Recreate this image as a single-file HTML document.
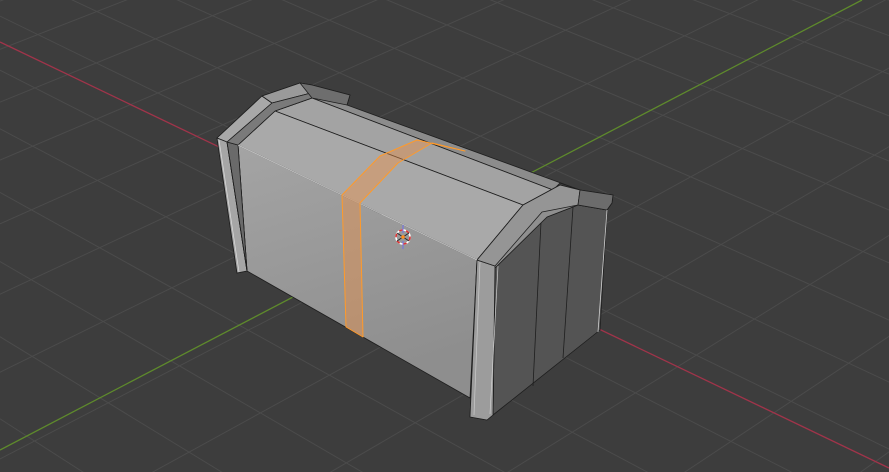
<!DOCTYPE html>
<html><head><meta charset="utf-8"><style>
html,body{margin:0;padding:0;background:#3d3d3d;overflow:hidden;width:889px;height:472px}
svg{display:block}
</style></head><body>
<svg id="s" width="889" height="472" viewBox="0 0 889 472" xmlns="http://www.w3.org/2000/svg">
<defs>
<linearGradient id="fg" x1="0" y1="0" x2="0.3" y2="1">
<stop offset="0" stop-color="#a4a4a4"/><stop offset="1" stop-color="#8e8e8e"/>
</linearGradient>
</defs>
<rect width="889" height="472" fill="#3d3d3d"/>
<g id="grid" stroke="#4b4b4b" stroke-width="1"></g>
<line x1="0" y1="42" x2="889" y2="468" stroke="#a0344a" stroke-width="1.3"/>
<line x1="0" y1="450" x2="862" y2="0" stroke="#5e8a2c" stroke-width="1.3"/>

<g stroke="#1e1e1e" stroke-width="0.8" stroke-linejoin="round">
<polygon points="312,85 350,95 347,105 580,190 560,183 553,190 312,98" fill="#8c8c8c"/>
<polygon points="312,98 553,190 523,205 275,111" fill="#a3a3a3"/>
<polygon points="275,111 523,205 477,260 238,145" fill="#a9a9a9"/>
<polygon points="238,145 477,260 470,398 247,271" fill="url(#fg)"/>
<!-- left cap -->
<polygon points="217,138 262,96 300,83 312,85 312,98 275,111 238,145 247,271 237,273" fill="#8f8f8f"/>
<polygon points="217,138 262,96 272,103 227,142" fill="#a8a8a8"/>
<polygon points="262,96 300,83 311,93 272,103" fill="#9a9a9a"/>
<polygon points="217,138 227,142 247,271 237,273" fill="#a6a6a6"/>
<polygon points="227,142 238,145 247,271" fill="#6a6a6a"/>
<polygon points="272,103 311,93 312,98 275,111 238,145 227,142" fill="#7a7a7a"/>
<polygon points="300,83 312,85 350,95 347,105 312,98" fill="#6e6e6e"/>
<line x1="219" y1="140" x2="239" y2="272" stroke="#dcdcdc" stroke-width="0.7"/>
<line x1="227" y1="142" x2="247" y2="271"/>
<!-- right side panel -->
<polygon points="495,268 547,217 578,205 607,210 600,330 590,338 493,415" fill="#545454"/>
<line x1="541" y1="222" x2="533" y2="386"/>
<line x1="573" y1="207" x2="563" y2="358"/>
<!-- right cap -->
<polygon points="477,260 523,205 560,185 580,190 613,195 612,203 607,210 578,205 547,217 495,268 493,415 487,420 470,417" fill="#8f8f8f"/>
<polygon points="477,260 495,266 493,415 487,420 470,417" fill="#9c9c9c"/>
<polygon points="495,266 542,212 578,205 580,190 560,185 523,205 477,260" fill="#959595"/>
<polygon points="580,190 613,195 612,203 607,210 578,205" fill="#6c6c6c"/>
<line x1="607" y1="210" x2="598" y2="332" stroke="#cfcfcf" stroke-width="0.8"/>
<line x1="480" y1="262" x2="474" y2="415" stroke="#c9c9c9" stroke-width="0.7"/>
<line x1="498" y1="266" x2="490" y2="414" stroke="#cfcfcf" stroke-width="0.7"/>
<line x1="238" y1="145" x2="477" y2="260" stroke="#d8d8d8" stroke-width="0.7"/>
</g>
<g stroke="#ff9a2a" stroke-width="1" fill="#e8904a" fill-opacity="0.45" stroke-linejoin="round">
<polygon points="342,195 380,156 417,140 465,151 432,143 398,163 360,203 363,337 346,327"/>
</g>
<g transform="translate(403,237)">
<circle r="7" fill="none" stroke="#fff" stroke-width="1.6"/>
<circle r="7" fill="none" stroke="#d33" stroke-width="1.6" stroke-dasharray="3.6 3.6"/>
<line x1="0" y1="-12" x2="0" y2="-4" stroke="#66f" stroke-width="0.8"/>
<line x1="0" y1="4" x2="0" y2="12" stroke="#66f" stroke-width="0.8"/>
<line x1="-6" y1="4" x2="6" y2="-4" stroke="#222" stroke-width="0.8"/>
<line x1="-6" y1="-4" x2="6" y2="4" stroke="#222" stroke-width="0.8"/>
<circle r="1.8" fill="#ff8c1a"/>
</g>
</svg>
<script>
(function(){
var g=document.getElementById('grid'),ns='http://www.w3.org/2000/svg';
function ln(x1,y1,x2,y2){var l=document.createElementNS(ns,'line');l.setAttribute('x1',x1);l.setAttribute('y1',y1);l.setAttribute('x2',x2);l.setAttribute('y2',y2);g.appendChild(l);}
function ext(px,py,vx,vy){var dx=px-vx,dy=py-vy;var t=6;ln(vx,vy,vx+dx*t,vy+dy*t);}
var VR=[-2600,-1250];
for(var k=-14;k<=14;k++){
  var s=k*1.0; var x=430+ s*(60 - s*1.2);
  var y=450-450*x/862;
  ext(x,y,VR[0],VR[1]);
}
var VG=[3200,-1200];
var x=-200;
for(var i=0;i<30;i++){
  var y=42+0.479*x; ext(x,y,VG[0],VG[1]);
  x+=48+0.055*(x+200);
}
})();
</script>
</body></html>
